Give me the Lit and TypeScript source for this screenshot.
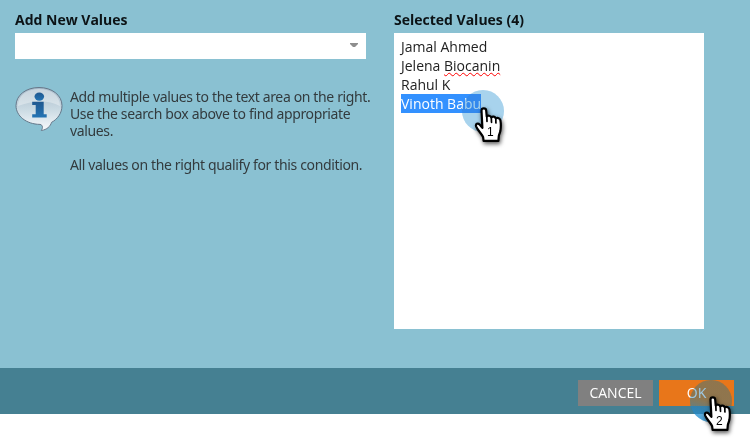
import { LitElement, html, css } from "lit";
import { customElement, property } from "lit/decorators.js";

@customElement("step-pointer")
class StepPointer extends LitElement {
  @property() step = "1";
  static styles = css`
    :host { display: block; width: 60px; height: 70px; pointer-events: none; }
    svg { position: absolute; left: 0; top: 0; overflow: visible; }
    .num { font: 12px "Liberation Sans", Arial, sans-serif; fill: #000; text-anchor: middle; }
    .tint, .glow { position: absolute; left: 2px; top: 5px; width: 42px; height: 42px; border-radius: 50%; filter: blur(0.6px); }
    .tint { background: #c0e0f2; mix-blend-mode: multiply; }
    .glow { background: rgba(90, 170, 222, 0.24); }
    .two.tint, .two.glow { left: 1px; top: 6px; }
    .two.glow { background: linear-gradient(195deg, rgba(75, 150, 200, 0.3) 50%, rgba(40, 145, 210, 0.72) 85%); }
    .hand { fill: #fff; stroke: #000; stroke-width: 2.2; stroke-linejoin: round; filter: drop-shadow(1px 2px 2px rgba(0, 0, 0, 0.65)); }
    .fold { fill: none; stroke: #000; stroke-width: 1.7; stroke-linecap: round; }
  `;
  render() {
    const kind = this.step === "2" ? "two" : "one";
    return html`
      <div class="tint ${kind}"></div>
      <div class="glow ${kind}"></div>
      <svg width="60" height="70" viewBox="0 0 60 70">
        <path class="hand" d="M21.5 25.6C21.5 22.6 26 22.6 26.2 25.6L26.7 31.4C28 30.3 30.4 30.5 31.2 32.3C32.7 31 35 31.5 35.7 33.3C37.8 32.3 40 33.3 40.4 35.4C41 38.5 41 42 40.4 45.8C40 48 39 49.5 38.8 51.2L38.4 55.8H23.6L23.1 52.2C22 49 17.8 45.5 16.2 41.6C15.2 38.8 17.8 37.6 19.6 39.6L22.4 42.8Z"></path>
        <path class="fold" d="M26.8 31.5L27 36.4M31.3 32.5L31.5 37.3M35.8 33.6L35.9 38"></path>
        <text class="num" x="30.4" y="51">${this.step}</text>
      </svg>`;
  }
}

@customElement("app-root")
class AppRoot extends LitElement {
  static styles = css`
    :host { display: block; position: relative; width: 750px; height: 440px; overflow: hidden; background: #fff; font: 14px/19px "Open Sans", "Noto Sans", sans-serif; color: #222; }
    .panel { box-sizing: border-box; height: 368px; padding: 10px 46px 0 15px; background: #8ac1d2; display: flex; gap: 28px; }
    .left { width: 351px; }
    .right { width: 310px; }
    .label { height: 23px; line-height: 20px; font-weight: 700; color: #0c1316; white-space: nowrap; }
    .combo { height: 26px; background: #fff; display: flex; align-items: center; justify-content: flex-end; padding: 0 8px 2px 0; box-sizing: border-box; }
    .combo svg, .info svg { display: block; }
    .info { display: flex; margin-top: 27px; gap: 7px; }
    .info svg { flex: none; }
    .copy { margin-top: 2px; font: 14px/17px "Noto Sans", sans-serif; letter-spacing: -0.36px; color: #333b3e; white-space: nowrap; }
    .copy p { margin: 0 0 17px; }
    .values { box-sizing: border-box; height: 296px; background: #fff; padding: 4px 7px; }
    .values div { height: 19px; white-space: nowrap; }
    .typo { text-decoration: underline wavy #f00 1px; text-underline-offset: 1px; }
    .picked { display: inline-block; height: 19px; background: #3391ff; color: #fff; }
    .bar { height: 46px; box-sizing: border-box; background: #458092; display: flex; justify-content: flex-end; gap: 6px; padding: 12px 16px 0 0; }
    button { width: 75px; height: 26px; border: 0; padding: 0; background: #808080; color: #fff; font: 14px/26px "Open Sans", sans-serif; }
    .ok { background: #e8761a; }
    step-pointer { position: absolute; }
    .first { left: 460px; top: 85px; }
    .second { left: 689px; top: 374px; }
  `;
  render() {
    return html`
      <div class="panel">
        <div class="left">
          <div class="label">Add New Values</div>
          <div class="combo"><svg width="8" height="4" viewBox="0 0 8 4"><path fill="#8e8e8e" d="M0 0H8V1L5 4H3L0 1Z" /></svg></div>
          <div class="info">
            <svg width="48" height="46" viewBox="0 0 48 46">
              <defs>
                <linearGradient id="g" x2="0" y2="1"><stop offset="0" stop-color="#a9bccb" /><stop offset=".5" stop-color="#c9d9e2" /><stop offset="1" stop-color="#f8fafc" /></linearGradient>
                <linearGradient id="b" x2="0" y2="1"><stop offset="0" stop-color="#20588f" /><stop offset="1" stop-color="#2474b4" /></linearGradient>
              </defs>
              <path fill="url(#g)" stroke="#66788a" d="M24 1.5C11 1.5 1 9.2 1 19.6C1 29.8 11 38.2 25 38.4C28 39 28 42 26.3 44.5C32 43.7 35.5 40.2 36.5 36.4C42.5 33.2 47 27.2 47 19.6C47 9.2 37 1.5 24 1.5Z" />
              <path fill="#fff" fill-opacity=".35" d="M3 20C3 9.5 12 3 24 3S45 9.5 45 20C32 13 16 15 3 20Z" />
              <ellipse cx="24.3" cy="10.6" rx="4.8" ry="4.1" fill="url(#b)" />
              <path fill="url(#b)" d="M17.2 15.7H28.7V28.2H31.7V31.4H17.2V28.2H20.7V18.9H17.2Z" />
            </svg>
            <div class="copy">
              <p>Add multiple values to the text area on the right.<br />Use the search box above to find appropriate<br />values.</p>
              <p>All values on the right qualify for this condition.</p>
            </div>
          </div>
        </div>
        <div class="right">
          <div class="label">Selected Values (4)</div>
          <div class="values">
            <div>Jamal Ahmed</div>
            <div>Jelena <span class="typo">Biocanin</span></div>
            <div>Rahul K</div>
            <div><span class="picked">Vinoth Babu</span></div>
          </div>
        </div>
      </div>
      <div class="bar"><button>CANCEL</button><button class="ok">OK</button></div>
      <step-pointer class="first" step="1"></step-pointer>
      <step-pointer class="second" step="2"></step-pointer>
    `;
  }
}
